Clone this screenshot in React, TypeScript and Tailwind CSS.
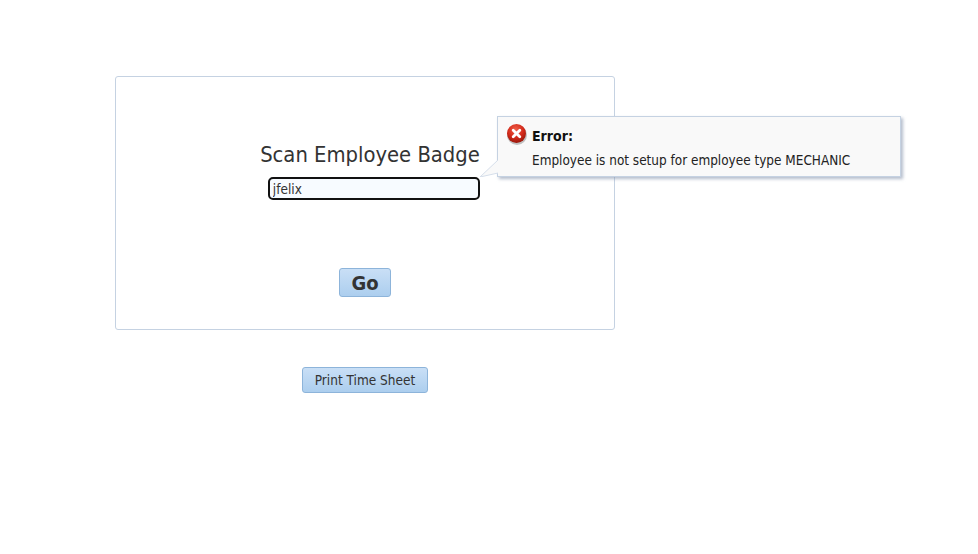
const font = "font-['DejaVu_Sans_Condensed','DejaVu_Sans',sans-serif]";

function ErrorIcon() {
  return (
    <svg width="22" height="22" viewBox="0 0 22 22" className="shrink-0">
      <defs>
        <radialGradient id="redBall" cx="45%" cy="30%" r="75%">
          <stop offset="0%" stopColor="#f0604a" />
          <stop offset="55%" stopColor="#d32a1a" />
          <stop offset="100%" stopColor="#8e1408" />
        </radialGradient>
      </defs>
      <circle cx="11" cy="12" r="10" fill="#555" opacity="0.35" />
      <circle cx="10.5" cy="10.5" r="9.5" fill="url(#redBall)" />
      <path d="M7.2 7.2 L13.8 13.8 M13.8 7.2 L7.2 13.8" stroke="#fff" strokeWidth="2.8" strokeLinecap="round" />
    </svg>
  );
}

function ErrorTip() {
  return (
    <div className="absolute left-[497px] top-[116px] h-[61px] w-[404px] border border-[#c5d2e2] bg-[#f9f9f9] shadow-[2px_2px_3px_rgba(130,145,170,0.6)]">
      <svg width="20" height="17" viewBox="0 0 20 17" className="absolute left-[-19px] top-[43px]">
        <path d="M19 0 L1 17 L19 13" fill="#f9f9f9" stroke="#d5deea" strokeWidth="1" />
      </svg>
      <div className="flex items-start gap-[4px] pl-[8px] pt-[6px]">
        <ErrorIcon />
        <span className="text-[14px] font-bold leading-[26px] text-[#111]">Error:</span>
      </div>
      <p className="pl-[34px] pt-[3px] text-[13.45px] leading-[18px] text-[#222]">
        Employee is not setup for employee type MECHANIC
      </p>
    </div>
  );
}

export default function App() {
  return (
    <div className={`relative min-h-[554px] bg-white pl-[115px] pt-[76px] ${font}`}>
      <div className="flex w-[500px] flex-col items-center">
        <div className="flex h-[254px] w-full flex-col items-center rounded-[3px] border border-[#c5d2e2] bg-white">
          <div className="ml-[10px] flex flex-col items-end pt-[62px]">
            <h1 className="text-[21.8px] font-normal leading-[32px] text-[#333]">Scan Employee Badge</h1>
            <input
              readOnly
              value="jfelix"
              className="mt-[6px] h-[23px] w-[212px] rounded-[5px] border-2 border-[#111] bg-[#f7fbff] pl-[3px] text-[13.5px] leading-[18px] text-[#333] outline-none"
            />
          </div>
          <button className="mt-[68px] h-[29px] w-[52px] rounded-[3px] border border-[#8db4da] bg-gradient-to-b from-[#c9dff6] to-[#acceee] text-[20px] font-bold leading-[26px] text-[#333]">
            Go
          </button>
        </div>
        <button className="mt-[37px] h-[26px] w-[126px] rounded-[3px] border border-[#8db4da] bg-gradient-to-b from-[#c9dff6] to-[#acceee] text-[13.5px] leading-[20px] text-[#333]">
          Print Time Sheet
        </button>
      </div>
      <ErrorTip />
    </div>
  );
}
